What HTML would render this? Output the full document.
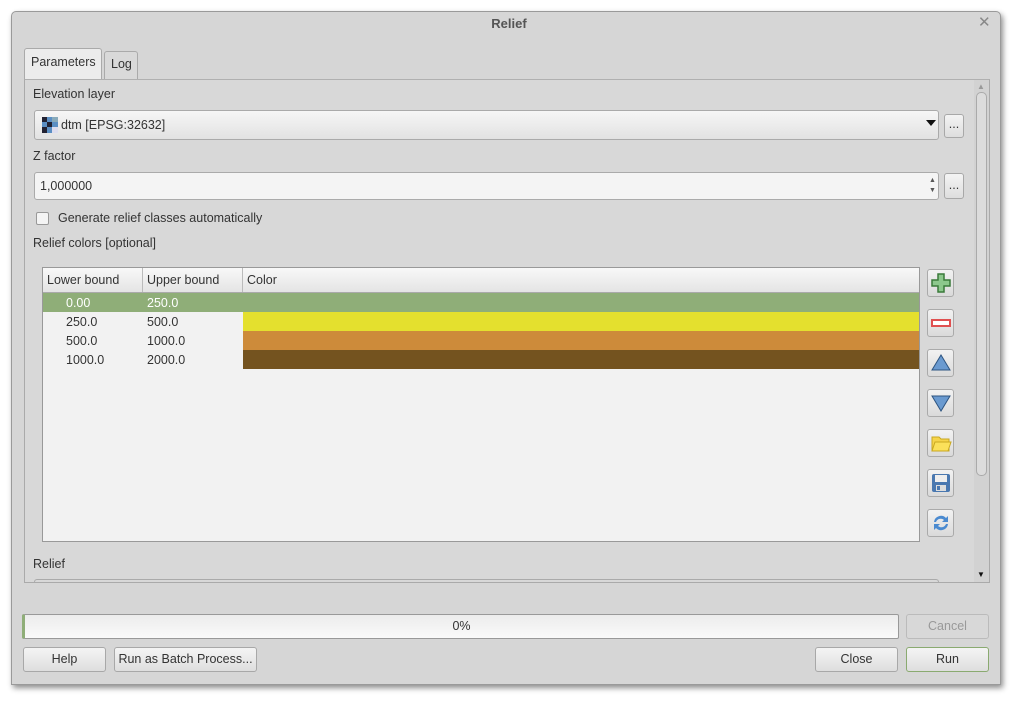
<!DOCTYPE html><html><head><style>
*{box-sizing:border-box}body{margin:0;width:1018px;height:701px;background:#fff;font-family:"Liberation Sans","DejaVu Sans",sans-serif;font-size:12.5px;color:#333;position:relative;overflow:hidden}
.a{position:absolute}
.win{left:11px;top:11px;width:990px;height:674px;background:#d6d6d6;border:1px solid #9a9a9a;border-radius:5px 5px 0 0;box-shadow:2px 3px 6px rgba(0,0,0,.45)}
.btn{position:absolute;border:1px solid #a8a8a8;border-radius:3px;background:linear-gradient(#f4f4f4,#dedede);text-align:center;line-height:23px;color:#333}
.ib{position:absolute;left:927px;width:27px;height:28px;border:1px solid #aaa;border-radius:3px;background:linear-gradient(#f2f2f2,#dadada)}
.ib svg{position:absolute;left:2px;top:2px}
td{padding:0 0 0 4px;height:19px}
</style></head><body>
<div class="a win"></div>
<div class="a" style="left:0;top:16px;width:1018px;text-align:center;font-weight:bold;color:#555;font-size:13px">Relief</div>
<div class="a" style="left:978px;top:13px;font-size:15px;color:#888;font-weight:bold">✕</div>
<div class="a" style="left:24px;top:48px;width:78px;height:33px;background:#ececec;border:1px solid #aaa;border-bottom:none;border-radius:3px 3px 0 0;padding:6px 0 0 6px">Parameters</div>
<div class="a" style="left:104px;top:51px;width:34px;height:29px;background:#d9d9d9;border:1px solid #aaa;border-bottom:none;border-radius:3px 3px 0 0;padding:5px 0 0 6px">Log</div>
<div class="a" style="left:24px;top:79px;width:966px;height:504px;border:1px solid #aaa;background:#d8d8d8;border-top:1px solid #b0b0b0"></div>
<div class="a" style="left:33px;top:87px">Elevation layer</div>
<div class="a" style="left:34px;top:110px;width:905px;height:30px;border:1px solid #aaa;border-radius:3px;background:linear-gradient(#f6f6f6,#e2e2e2)"></div>
<svg class="a" style="left:42px;top:117px" width="16" height="16"><rect width="16" height="16" fill="#5b8fc4"/><rect width="5" height="5" fill="#223"/><rect x="5" y="5" width="5" height="5" fill="#223"/><rect x="0" y="10" width="5" height="6" fill="#223"/><rect x="10" y="0" width="6" height="5" fill="#8ab"/><rect x="10" y="10" width="6" height="6" fill="#dde"/></svg>
<div class="a" style="left:61px;top:118px">dtm [EPSG:32632]</div>
<div class="a" style="left:926px;top:120px;border-left:5px solid transparent;border-right:5px solid transparent;border-top:6px solid #111"></div>
<div class="btn" style="left:944px;top:114px;width:20px;height:24px;line-height:18px">...</div>
<div class="a" style="left:33px;top:149px">Z factor</div>
<div class="a" style="left:34px;top:172px;width:905px;height:28px;border:1px solid #aaa;border-radius:3px;background:#f4f4f4;padding:6px 0 0 5px">1,000000</div>
<div class="a" style="left:929px;top:176px;font-size:7px;color:#555;line-height:10px">▲<br>▼</div>
<div class="btn" style="left:944px;top:173px;width:20px;height:26px;line-height:22px">...</div>
<div class="a" style="left:36px;top:212px;width:13px;height:13px;border:1px solid #999;background:#f4f4f4;border-radius:2px"></div>
<div class="a" style="left:58px;top:211px">Generate relief classes automatically</div>
<div class="a" style="left:33px;top:236px">Relief colors [optional]</div>
<div class="a" style="left:42px;top:267px;width:878px;height:275px;border:1px solid #999;background:#f2f2f2">
<div style="height:25px;background:linear-gradient(#f8f8f8,#e4e4e4);border-bottom:1px solid #aaa;display:flex;line-height:24px"><div style="width:100px;border-right:1px solid #bbb;padding-left:4px">Lower bound</div><div style="width:100px;border-right:1px solid #bbb;padding-left:4px">Upper bound</div><div style="padding-left:4px">Color</div></div>
<table style="border-collapse:collapse;font-size:12.5px;width:876px"><tr style="background:#8fae78;color:#fff"><td style="width:100px;padding-left:23px">0.00</td><td style="width:100px">250.0</td><td></td></tr>
<tr><td style="padding-left:23px">250.0</td><td>500.0</td><td style="background:#e4e02e"></td></tr>
<tr><td style="padding-left:23px">500.0</td><td>1000.0</td><td style="background:#cd8b3a"></td></tr>
<tr><td style="padding-left:23px">1000.0</td><td>2000.0</td><td style="background:#74531f"></td></tr></table></div>
<div class="ib" style="top:269px"><svg width="22" height="22"><path d="M8 2h6v6h6v6h-6v6H8v-6H2V8h6z" fill="#8cc88c" stroke="#3a7a3a" stroke-width="1.5"/></svg></div>
<div class="ib" style="top:309px"><svg width="22" height="22"><rect x="2" y="8" width="18" height="6" fill="#fff" stroke="#e05050" stroke-width="2"/></svg></div>
<div class="ib" style="top:349px"><svg width="22" height="22"><path d="M11 3L20 18H2z" fill="#6a9ad0" stroke="#2d5480"/></svg></div>
<div class="ib" style="top:389px"><svg width="22" height="22"><path d="M2 4H20L11 19z" fill="#6a9ad0" stroke="#2d5480"/></svg></div>
<div class="ib" style="top:429px"><svg width="22" height="22"><path d="M2 5h7l2 2h8v12H2z" fill="#f6d44a" stroke="#c9a820"/><path d="M2 19l3-9h16l-3 9z" fill="#fbe05a" stroke="#c9a820"/></svg></div>
<div class="ib" style="top:469px"><svg width="22" height="22"><rect x="2" y="2" width="18" height="18" rx="2" fill="#4a78b0"/><rect x="5" y="3" width="12" height="7" fill="#eee"/><rect x="6" y="13" width="10" height="6" fill="#ddd"/><rect x="7" y="14" width="3" height="4" fill="#4a78b0"/></svg></div>
<div class="ib" style="top:509px"><svg width="22" height="22"><path d="M4 10a7 7 0 0 1 12-4l2-2v6h-6l2-2a5 5 0 0 0-8 2z" fill="#4a8ad0"/><path d="M18 12a7 7 0 0 1-12 4l-2 2v-6h6l-2 2a5 5 0 0 0 8-2z" fill="#4a8ad0"/></svg></div>
<div class="a" style="left:974px;top:80px;width:15px;height:502px;background:#d2d2d2"></div>
<div class="a" style="left:976px;top:92px;width:11px;height:384px;border:1px solid #aaa;border-radius:5px;background:#dcdcdc"></div>
<div class="a" style="left:977px;top:82px;font-size:8px;color:#999">▲</div>
<div class="a" style="left:977px;top:570px;font-size:8px;color:#111">▼</div>
<div class="a" style="left:33px;top:557px">Relief</div>
<div class="a" style="left:34px;top:579px;width:905px;height:4px;border:1px solid #aaa;border-bottom:none;border-radius:3px 3px 0 0"></div>
<div class="a" style="left:22px;top:614px;width:877px;height:25px;border:1px solid #999;border-radius:2px;background:linear-gradient(#ececec,#fafafa);text-align:center;line-height:23px;border-left:3px solid #8fae78">0%</div>
<div class="btn" style="left:906px;top:614px;width:83px;height:25px;color:#999;background:#d8d8d8;border-color:#bbb">Cancel</div>
<div class="btn" style="left:23px;top:647px;width:83px;height:25px">Help</div>
<div class="btn" style="left:114px;top:647px;width:143px;height:25px">Run as Batch Process...</div>
<div class="btn" style="left:815px;top:647px;width:83px;height:25px">Close</div>
<div class="btn" style="left:906px;top:647px;width:83px;height:25px;border-color:#8aaa70">Run</div>
</body></html>
